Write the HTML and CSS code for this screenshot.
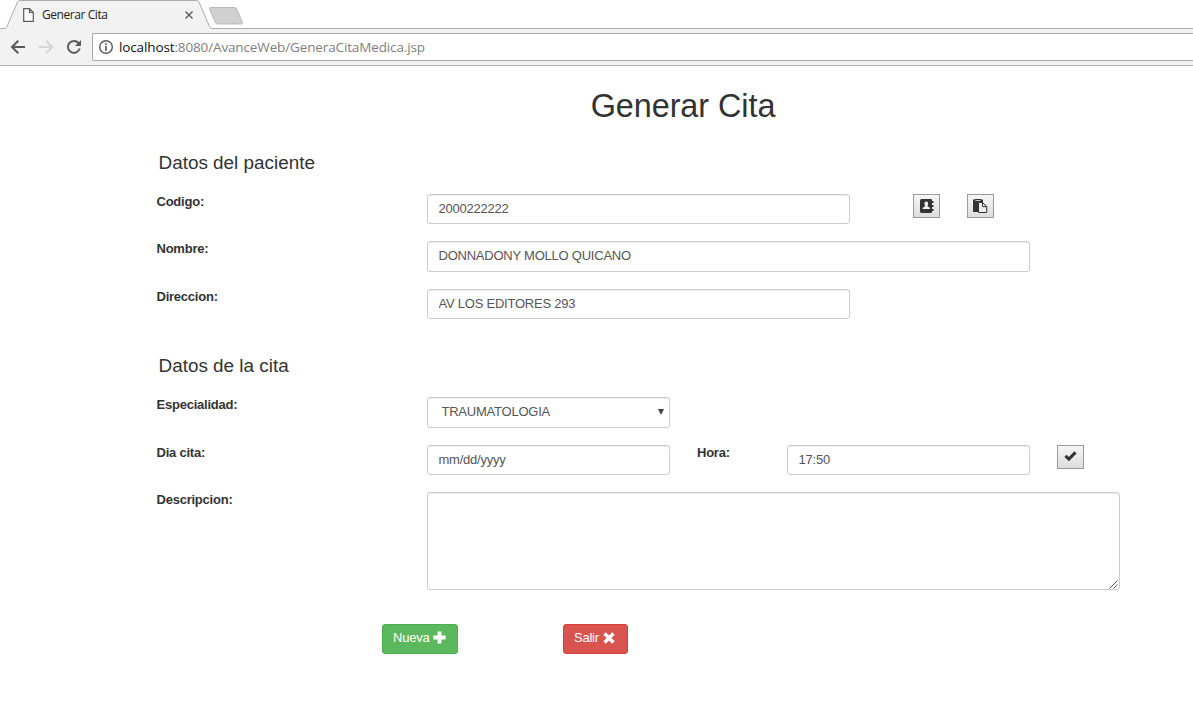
FILE: index.html
```html
<!DOCTYPE html>
<html lang="es">
<head>
<meta charset="utf-8">
<title>Generar Cita</title>
<link rel="stylesheet" href="styles.css">
</head>
<body>
<header class="browser">
  <div class="tabstrip">
    <svg class="tab-shape" width="250" height="29" viewBox="0 0 250 29">
      <path d="M0 29V28.5H4Q6 28.5 7 26.500L17.500 2Q18.300 .5 20 .5H196.500Q198.200 .5 199 2L209.500 26.500Q210.500 28.500 212.500 28.500H250V29z" fill="#f2f2f2"/>
      <path d="M0 28.500H4Q6 28.500 7 26.500L17.500 2Q18.300 .5 20 .5H196.500Q198.200 .5 199 2L209.500 26.500Q210.500 28.500 212.500 28.500H250" fill="none" stroke="#adadad"/>
      <path d="M211 7.500H234.500Q236 7.500 236.700 9L242.500 22.500Q243 24 241.500 24H218Q216 24 215.300 22.500L209.500 9Q209 7.500 211 7.500z" fill="#d0d0d0" stroke="#b9b9b9"/>
    </svg>
    <div class="tab">
      <svg class="page-icon" width="11" height="14" viewBox="0 0 11 14"><path d="M.7.7H6.500L10.300 4.500V13.300H.7zM6.500.7V4.500H10.300" fill="#fff" stroke="#5a5a5a" stroke-width="1.200"/></svg>
      <span class="tab-title">Generar Cita</span>
      <svg width="8" height="8" viewBox="0 0 8 8"><path d="M.5.5 7.500 7.500M7.500.5.5 7.500" stroke="#5a5a5a" stroke-width="1.400"/></svg>
    </div>
  </div>
  <div class="toolbar">
    <svg class="nav" width="82" height="20" viewBox="0 0 82 20">
      <path d="M25 10H12M18.300 3.700 12 10 18.300 16.300" fill="none" stroke="#5a5a5a" stroke-width="2"/>
      <path d="M39 10H52M46 3.700 52.300 10 46 16.300" fill="none" stroke="#d5d5d5" stroke-width="2"/>
      <path d="M78.500 6A6 6 0 1 0 79.700 11.500" fill="none" stroke="#5a5a5a" stroke-width="2"/>
      <path d="M81 3V9H75z" fill="#5a5a5a"/>
    </svg>
    <div class="address">
      <svg width="14" height="14" viewBox="0 0 14 14"><circle cx="7" cy="7" r="6.300" fill="none" stroke="#5a5a5a" stroke-width="1.400"/><path d="M7 3.300V5M7 6V10.800" stroke="#5a5a5a" stroke-width="1.700"/></svg>
      <span class="url"><span class="host">localhost</span>:8080/AvanceWeb/GeneraCitaMedica.jsp</span>
    </div>
  </div>
</header>
<main class="page">
  <h1 class="title">Generar Cita</h1>
  <form class="form">
    <h2 class="section">Datos del paciente</h2>
    <div class="row">
      <label class="label" for="codigo">Codigo:</label>
      <input class="control wide-md" id="codigo" value="2000222222">
      <button class="icon-btn search-btn" type="button" aria-label="Buscar paciente">
        <svg width="14" height="14" viewBox="0 0 14 14"><path fill="#333" d="M1.500 0H11Q12 0 12 1V2H13.500V4H12V6H13.500V8H12V10H13.500V12H12V13Q12 14 11 14H1.500Q0 14 0 12.500V1.500Q0 0 1.500 0z"/><path fill="#f1f1f1" d="M6.300 2.500C8 2.500 8.500 4 8 5.600L7.600 6.600V7.300L9.500 8.400Q10 8.800 10 10H2.600Q2.600 8.800 3.200 8.400L5.100 7.300V6.600C4.200 5.500 3.900 2.500 6.300 2.500z"/></svg>
      </button>
      <button class="icon-btn paste-btn" type="button" aria-label="Pegar">
        <svg width="15" height="14" viewBox="0 0 15 14"><path fill="#333" d="M0 .5H2V0H8V.5H10V3H5V13H0z"/><path fill="#eee" d="M2.500 1.200H7.500V2H2.500z"/><path fill="#eee" stroke="#333" d="M5.500 3.500H9.500L13.700 7.600V13.500H5.500z"/><path fill="#eee" stroke="#333" d="M9.500 3.500V7.600H13.700z"/></svg>
      </button>
    </div>
    <div class="row">
      <label class="label" for="nombre">Nombre:</label>
      <input class="control wide-lg tall" id="nombre" value="DONNADONY MOLLO QUICANO">
    </div>
    <div class="row">
      <label class="label" for="direccion">Direccion:</label>
      <input class="control wide-md" id="direccion" value="AV LOS EDITORES 293">
    </div>
    <h2 class="section second">Datos de la cita</h2>
    <div class="row">
      <label class="label" for="especialidad">Especialidad:</label>
      <div class="select-wrap">
        <select class="control select tall" id="especialidad"><option>TRAUMATOLOGIA</option></select>
        <svg class="caret" width="6" height="6" viewBox="0 0 6 6"><path d="M0 0H6L3 6z" fill="#444"/></svg>
      </div>
    </div>
    <div class="row">
      <label class="label" for="dia">Dia cita:</label>
      <input class="control wide-sm" id="dia" value="mm/dd/yyyy">
      <label class="label hour-label" for="hora">Hora:</label>
      <input class="control wide-sm" id="hora" value="17:50">
      <button class="icon-btn check-btn" type="button" aria-label="Verificar">
        <svg width="13" height="10" viewBox="0 0 13 10"><path d="M1.400 4.800 4.900 8.100 11.500 1.400" fill="none" stroke="#333" stroke-width="3"/></svg>
      </button>
    </div>
    <div class="row area-row">
      <label class="label" for="descripcion">Descripcion:</label>
      <div class="area-wrap">
        <textarea class="control area" id="descripcion"></textarea>
        <svg class="grip" width="9" height="9" viewBox="0 0 9 9"><path d="M.5 8.500 8.500.5M4.500 8.500 8.500 4.500" stroke="#555"/></svg>
      </div>
    </div>
    <div class="actions">
      <button class="btn btn-new" type="button">Nueva <svg width="13" height="13" viewBox="0 0 13 13"><path d="M4.600.5H8.400V4.600H12.600V8.400H8.400V12.500H4.600V8.400H.4V4.600H4.600z" fill="#fff"/></svg></button>
      <button class="btn btn-exit" type="button">Salir <svg width="12" height="12" viewBox="0 0 12 12"><path d="M1.600 1.600 10.400 10.400M10.400 1.600 1.600 10.400" stroke="#fff" stroke-width="3.500"/></svg></button>
    </div>
  </form>
</main>
</body>
</html>
```
FILE: styles.css
```css
* { box-sizing: border-box; }
body {
  margin: 0;
  height: 706px;
  overflow: hidden;
  background: #fff;
  color: #333;
  font: 13px/18px "Liberation Sans", Arial, sans-serif;
}
svg { display: block; flex: none; }

.browser { height: 66px; background: #f2f2f2; border-bottom: 1px solid #b3b3b3; }
.tabstrip { position: relative; height: 29px; background: #fff; border-bottom: 1px solid #adadad; }
.tab-shape { position: absolute; left: 0; top: 0; }
.tab {
  position: relative;
  display: flex;
  align-items: center;
  width: 194px;
  height: 29px;
  padding-left: 23px;
}
.tab-title {
  flex: none;
  width: 132px;
  margin: 0 11px 0 8px;
  color: #222;
  font: 12px/16px "Open Sans", "Noto Sans", sans-serif;
  letter-spacing: -.43px;
}
.toolbar { display: flex; padding-top: 4px; }
.nav { margin: 4px 10px 0 0; }
.address {
  display: flex;
  align-items: center;
  flex: 1;
  height: 28px;
  padding-left: 6px;
  background: #fff;
  border: 1px solid #a9a9a9;
  border-right: 0;
  border-radius: 2px 0 0 2px;
}
.url {
  margin-left: 6px;
  color: #808080;
  font: 13.5px/18px "Open Sans", "Noto Sans", sans-serif;
  letter-spacing: -.13px;
}
.host { color: #111; }

.page { padding-left: 156.500px; }
.title {
  width: 1053px;
  margin: 20px 0 0;
  font-size: 32.4px;
  font-weight: 400;
  line-height: 40px;
  letter-spacing: -.06px;
  text-align: center;
}
.section {
  margin: 26px 0 21px 2px;
  font-size: 18.9px;
  font-weight: 400;
  line-height: 21px;
}
.section.second { margin-top: 18.700px; margin-bottom: 21.500px; }
.row { display: flex; align-items: flex-start; height: 47.400px; }
.label {
  flex: none;
  width: 270.500px;
  font-weight: 700;
  line-height: 15px;
  letter-spacing: -.23px;
}
.hour-label { width: 90px; margin-left: 27px; }
.control {
  display: block;
  flex: none;
  height: 30px;
  margin: 0;
  padding: 0 11px 1px 10.500px;
  border: 1px solid #ccc;
  border-radius: 3px;
  background: #fff;
  box-shadow: inset 0 1px 1px rgba(0, 0, 0, .075);
  color: #555;
  font: 13px/18px "Liberation Sans", Arial, sans-serif;
  letter-spacing: -.23px;
}
.tall { height: 31px; padding-bottom: 2px; }
.wide-sm { width: 243px; }
.wide-md { width: 423px; }
.wide-lg { width: 603px; }
.select-wrap { position: relative; width: 243px; }
.select { width: 100%; padding-left: 13.500px; appearance: none; }
.caret { position: absolute; right: 6px; top: 12px; }
.area-wrap { position: relative; width: 693px; }
.area { width: 100%; height: 98px; resize: none; }
.grip { position: absolute; right: 2px; bottom: 1px; }
.icon-btn {
  display: flex;
  align-items: center;
  justify-content: center;
  width: 27px;
  height: 24px;
  padding: 0 0 1px;
  border: 1px solid #999;
  border-radius: 0;
  background: linear-gradient(#f6f6f6, #ddd);
}
.search-btn { margin-left: 63px; }
.paste-btn { margin-left: 27px; }
.check-btn { margin-left: 27px; }
.area-row { height: 132px; }
.actions { display: flex; gap: 105px; padding-left: 225.500px; }
.btn {
  display: flex;
  align-items: center;
  gap: 4px;
  height: 30px;
  padding: 0 10px 3px;
  border: 1px solid;
  border-radius: 3px;
  color: #fff;
  font: 13px/18px "Liberation Sans", Arial, sans-serif;
  letter-spacing: -.23px;
}
.btn-new { width: 76px; background: #5cb85c; border-color: #4cae4c; }
.btn-exit { width: 65px; background: #d9534f; border-color: #d43f3a; }
```
